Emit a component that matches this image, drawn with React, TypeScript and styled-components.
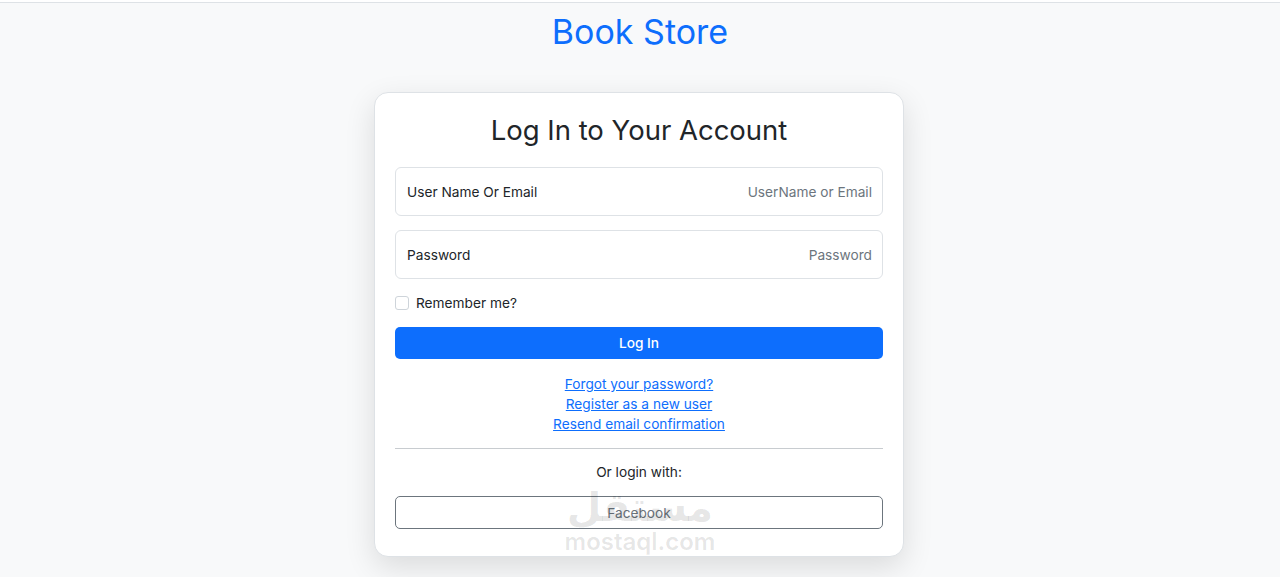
import styled, { createGlobalStyle } from 'styled-components';

const GlobalStyle = createGlobalStyle`
  html, body {
    margin: 0;
    padding: 0;
    background: #f8f9fa;
    font-family: Inter, "Liberation Sans", Arial, sans-serif;
    color: #212529;
  }
  * { box-sizing: border-box; }
`;

const Page = styled.div`
  min-height: 577px;
  position: relative;
  overflow: hidden;
`;

const TopBar = styled.div`
  height: 3px;
  background: #ffffff;
  border-bottom: 1px solid #dee2e6;
`;

const Brand = styled.h1`
  margin: 8px 0 0;
  text-align: center;
  font-size: 34px;
  font-weight: 400;
  line-height: 42px;
  color: #0d6efd;
`;

const Card = styled.div`
  width: 530px;
  margin: 39px auto 0;
  transform: translateX(-1px);
  background: #fff;
  border: 1px solid #dee2e6;
  border-radius: 14px;
  box-shadow: 0 10px 30px rgba(0, 0, 0, 0.12);
  padding: 18px 20px 27px;
  display: flex;
  flex-direction: column;
`;

const Title = styled.h2`
  margin: 0 0 18px;
  text-align: center;
  font-size: 27.5px;
  font-weight: 400;
  line-height: 38px;
  color: #212529;
`;

const Field = styled.label<{ $gap?: number }>`
  display: flex;
  align-items: center;
  justify-content: space-between;
  height: 49px;
  padding: 0 10px 0 11px;
  border: 1px solid #dee2e6;
  border-radius: 6px;
  margin-bottom: ${({ $gap }) => $gap ?? 14}px;
  font-size: 13.7px;
`;

const FieldLabel = styled.span`
  color: #212529;
`;

const Placeholder = styled.span`
  color: #6c757d;
`;

const CheckRow = styled.label`
  display: flex;
  align-items: center;
  gap: 7px;
  height: 20px;
  font-size: 13.7px;
  color: #212529;
  margin-bottom: 14px;
`;

const Box = styled.span`
  width: 14px;
  height: 14px;
  border: 1px solid #ced4da;
  border-radius: 3px;
  background: #fff;
`;

const Primary = styled.button`
  height: 32px;
  border: none;
  border-radius: 5px;
  background: #0d6efd;
  color: #fff;
  font-family: inherit;
  font-size: 13.7px;
  font-weight: 500;
`;

const Links = styled.div`
  display: flex;
  flex-direction: column;
  align-items: center;
  margin-top: 15px;
`;

const LinkItem = styled.a`
  font-size: 13.7px;
  line-height: 20px;
  color: #0d6efd;
  text-decoration: underline;
`;

const Rule = styled.hr`
  width: 100%;
  margin: 14px 0 0;
  border: none;
  border-top: 1px solid #c8ccd0;
`;

const OrText = styled.p`
  margin: 13px 0 14px;
  text-align: center;
  font-size: 13.7px;
  line-height: 20px;
  color: #212529;
`;

const Outline = styled.button`
  height: 33px;
  background: #fff;
  border: 1px solid #6c757d;
  border-radius: 5px;
  color: #6c757d;
  font-family: inherit;
  font-size: 13.7px;
`;

const Watermark = styled.div`
  position: absolute;
  left: 565px;
  top: 485px;
  width: 150px;
  display: flex;
  flex-direction: column;
  align-items: center;
  color: rgba(0, 0, 0, 0.1);
  pointer-events: none;
`;

const WmArabic = styled.span`
  font-family: "DejaVu Sans", sans-serif;
  font-size: 40px;
  font-weight: 700;
  line-height: 44px;
`;

const WmLatin = styled.span`
  font-size: 24px;
  font-weight: 600;
  line-height: 26px;
`;

export default function App() {
  return (
    <Page>
      <GlobalStyle />
      <TopBar />
      <Brand>Book Store</Brand>
      <Card>
        <Title>Log In to Your Account</Title>
        <Field>
          <FieldLabel>User Name Or Email</FieldLabel>
          <Placeholder>UserName or Email</Placeholder>
        </Field>
        <Field>
          <FieldLabel>Password</FieldLabel>
          <Placeholder>Password</Placeholder>
        </Field>
        <CheckRow>
          <Box />
          Remember me?
        </CheckRow>
        <Primary>Log In</Primary>
        <Links>
          <LinkItem href="#">Forgot your password?</LinkItem>
          <LinkItem href="#">Register as a new user</LinkItem>
          <LinkItem href="#">Resend email confirmation</LinkItem>
        </Links>
        <Rule />
        <OrText>Or login with:</OrText>
        <Outline>Facebook</Outline>
      </Card>
      <Watermark>
        <WmArabic>مستقل</WmArabic>
        <WmLatin>mostaql.com</WmLatin>
      </Watermark>
    </Page>
  );
}
